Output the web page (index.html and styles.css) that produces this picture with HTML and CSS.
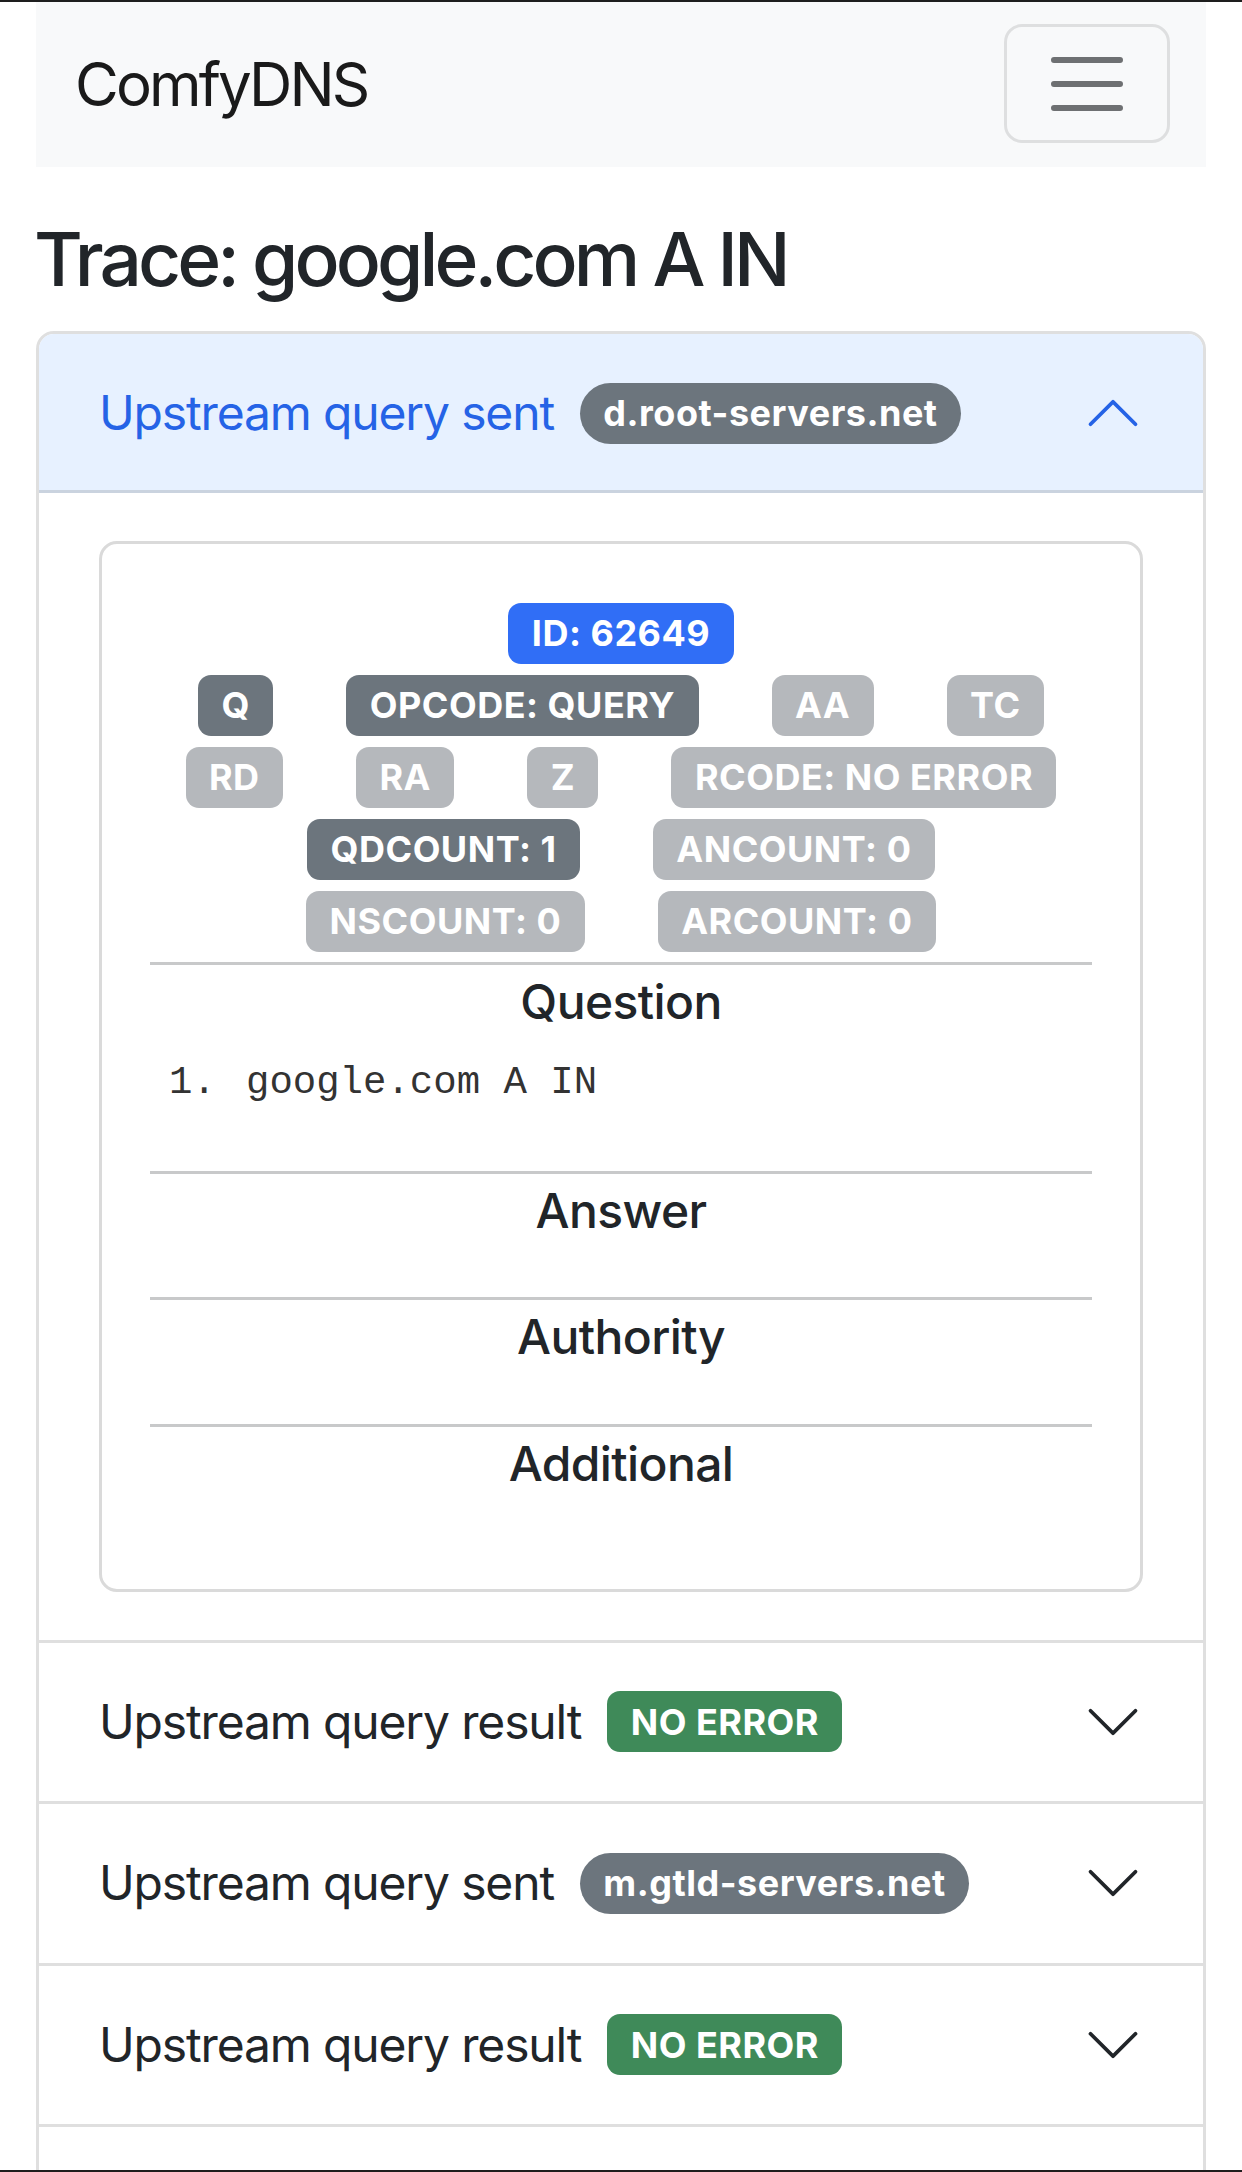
FILE: index.html
```html
<!DOCTYPE html>
<html lang="en">
<head>
<meta charset="utf-8">
<title>ComfyDNS – Trace</title>
<link rel="stylesheet" href="styles.css">
</head>
<body>
<div class="page">
  <nav class="navbar">
    <span class="brand">ComfyDNS</span>
    <button class="toggler" type="button" aria-label="Toggle navigation">
      <svg class="toggler-icon" viewBox="0 0 30 30" width="90" height="90"><path d="M4 7h22M4 15h22M4 23h22" stroke="currentColor" stroke-width="2" stroke-linecap="round" fill="none"/></svg>
    </button>
  </nav>

  <h2 class="title">Trace: google.com A IN</h2>

  <div class="accordion">
    <div class="acc-item">
      <div class="acc-button open">
        <span class="acc-label">Upstream query sent</span>
        <span class="badge pill secondary">d.root-servers.net</span>
        <svg class="chevron up" viewBox="0 0 16 16" width="60" height="60"><path fill="currentColor" fill-rule="evenodd" d="M1.646 4.646a.5.5 0 0 1 .708 0L8 10.293l5.646-5.647a.5.5 0 0 1 .708.708l-6 6a.5.5 0 0 1-.708 0l-6-6a.5.5 0 0 1 0-.708z"/></svg>
      </div>
      <div class="acc-body">
        <div class="card">
          <div class="flags">
            <div class="flag-row"><span class="badge primary">ID: 62649</span></div>
            <div class="flag-row">
              <span class="badge secondary">Q</span>
              <span class="badge secondary">OPCODE: QUERY</span>
              <span class="badge faded">AA</span>
              <span class="badge faded">TC</span>
            </div>
            <div class="flag-row">
              <span class="badge faded">RD</span>
              <span class="badge faded">RA</span>
              <span class="badge faded">Z</span>
              <span class="badge faded">RCODE: NO ERROR</span>
            </div>
            <div class="flag-row">
              <span class="badge secondary">QDCOUNT: 1</span>
              <span class="badge faded">ANCOUNT: 0</span>
            </div>
            <div class="flag-row">
              <span class="badge faded">NSCOUNT: 0</span>
              <span class="badge faded">ARCOUNT: 0</span>
            </div>
          </div>

          <hr class="sep">
          <h6 class="section-title">Question</h6>
          <ol class="records"><li>google.com A IN</li></ol>

          <hr class="sep">
          <h6 class="section-title">Answer</h6>
          <ol class="records"></ol>

          <hr class="sep">
          <h6 class="section-title">Authority</h6>
          <ol class="records"></ol>

          <hr class="sep">
          <h6 class="section-title">Additional</h6>
          <ol class="records last"></ol>
        </div>
      </div>
    </div>

    <div class="acc-item">
      <div class="acc-button">
        <span class="acc-label">Upstream query result</span>
        <span class="badge success">NO ERROR</span>
        <svg class="chevron" viewBox="0 0 16 16" width="60" height="60"><path fill="currentColor" fill-rule="evenodd" d="M1.646 4.646a.5.5 0 0 1 .708 0L8 10.293l5.646-5.647a.5.5 0 0 1 .708.708l-6 6a.5.5 0 0 1-.708 0l-6-6a.5.5 0 0 1 0-.708z"/></svg>
      </div>
    </div>

    <div class="acc-item">
      <div class="acc-button">
        <span class="acc-label">Upstream query sent</span>
        <span class="badge pill secondary">m.gtld-servers.net</span>
        <svg class="chevron" viewBox="0 0 16 16" width="60" height="60"><path fill="currentColor" fill-rule="evenodd" d="M1.646 4.646a.5.5 0 0 1 .708 0L8 10.293l5.646-5.647a.5.5 0 0 1 .708.708l-6 6a.5.5 0 0 1-.708 0l-6-6a.5.5 0 0 1 0-.708z"/></svg>
      </div>
    </div>

    <div class="acc-item">
      <div class="acc-button">
        <span class="acc-label">Upstream query result</span>
        <span class="badge success">NO ERROR</span>
        <svg class="chevron" viewBox="0 0 16 16" width="60" height="60"><path fill="currentColor" fill-rule="evenodd" d="M1.646 4.646a.5.5 0 0 1 .708 0L8 10.293l5.646-5.647a.5.5 0 0 1 .708.708l-6 6a.5.5 0 0 1-.708 0l-6-6a.5.5 0 0 1 0-.708z"/></svg>
      </div>
    </div>

    <div class="acc-item">
      <div class="acc-button">
        <svg class="chevron" viewBox="0 0 16 16" width="60" height="60"><path fill="currentColor" fill-rule="evenodd" d="M1.646 4.646a.5.5 0 0 1 .708 0L8 10.293l5.646-5.647a.5.5 0 0 1 .708.708l-6 6a.5.5 0 0 1-.708 0l-6-6a.5.5 0 0 1 0-.708z"/></svg>
      </div>
    </div>
  </div>
</div>
</body>
</html>
```

FILE: styles.css
```css
html, body {
  margin: 0;
  padding: 0;
  background: #fff;
}

body {
  font-family: Inter, "Noto Sans", "Liberation Sans", sans-serif;
  font-size: 48px;
  line-height: 1.5;
  color: #212529;
}

body::before,
body::after {
  content: "";
  position: fixed;
  left: 0;
  right: 0;
  height: 2px;
  background: #1e1e1e;
  z-index: 10;
}
body::before { top: 0; }
body::after { bottom: 0; }

.page {
  padding: 0 36px;
}

/* Navbar */
.navbar {
  display: flex;
  align-items: center;
  justify-content: space-between;
  height: 167px;
  box-sizing: border-box;
  padding: 0 36px 0 39px;
  background: #f8f9fa;
}

.brand {
  font-size: 60px;
  line-height: 90px;
  letter-spacing: -2.9px;
  color: #1a1a1a;
}

.toggler {
  width: 166px;
  height: 119px;
  box-sizing: border-box;
  border: 3px solid rgba(0, 0, 0, 0.1);
  border-radius: 18px;
  background: transparent;
  padding: 0;
  display: flex;
  align-items: center;
  justify-content: center;
  color: #6e7072;
}

.toggler-icon {
  display: block;
}

/* Heading */
.title {
  font-size: 74.8px;
  font-weight: 500;
  line-height: 1.2;
  letter-spacing: -3.9px;
  margin: 48px 0 26px -2px;
  color: #212529;
}

/* Accordion */
.accordion {
  border: 3px solid #dfdfdf;
  border-radius: 18px;
  overflow: hidden;
}

.acc-item + .acc-item {
  border-top: 3px solid #dfdfdf;
}

.acc-button {
  display: flex;
  align-items: center;
  padding: 48px 60px;
  height: 158.5px;
  box-sizing: border-box;
  font-size: 48px;
  color: #212529;
  background: #fff;
}

.acc-button.open {
  color: #2563e6;
  background: #e7f1ff;
  box-shadow: inset 0 -3px 0 #cad3df;
  height: 159px;
}

.acc-label {
  white-space: nowrap;
  line-height: 62px;
  letter-spacing: -1.15px;
}

.acc-button .badge {
  margin-left: 26px;
}

.chevron {
  margin-left: auto;
  flex-shrink: 0;
  display: block;
}

.chevron.up {
  transform: rotate(180deg);
}

.acc-body {
  padding: 48px 60px;
}

/* Card */
.card {
  border: 3px solid #dadada;
  border-radius: 18px;
  padding: 48px;
}

.flags {
  margin-bottom: 10px;
}

.flag-row {
  display: flex;
  justify-content: center;
  column-gap: 73px;
  height: 72px;
  box-sizing: border-box;
  padding-top: 11px;
}

/* Badges */
.badge {
  display: inline-block;
  font-size: 36px;
  font-weight: 700;
  line-height: 1;
  letter-spacing: 0.5px;
  padding: 12.6px 23.4px;
  border-radius: 13px;
  color: #fff;
  white-space: nowrap;
}

.badge.pill {
  border-radius: 999px;
}

.badge.primary { background: #306ef6; }
.badge.secondary { background: #6c757d; }
.badge.faded { background: #b5b8bc; }
.badge.success { background: #3f8a59; }

/* Sections */
.sep {
  border: 0;
  border-top: 3px solid #c8c9ca;
  margin: 0 0 8px;
  height: 0;
}

.section-title {
  font-size: 48px;
  font-weight: 500;
  line-height: 57.6px;
  letter-spacing: -0.6px;
  text-align: center;
  margin: 0 0 24px;
  color: #212529;
}

.records {
  margin: 0 0 58px;
  padding-left: 96px;
  list-style: none;
  font-family: "Liberation Mono", "DejaVu Sans Mono", monospace;
  font-size: 39px;
  line-height: 58.5px;
  color: #333;
}

.records li::before {
  content: counter(list-item) ".";
  display: inline-block;
  width: 77px;
  margin-left: -77px;
}

.records.last {
  margin-bottom: 48px;
}
```
